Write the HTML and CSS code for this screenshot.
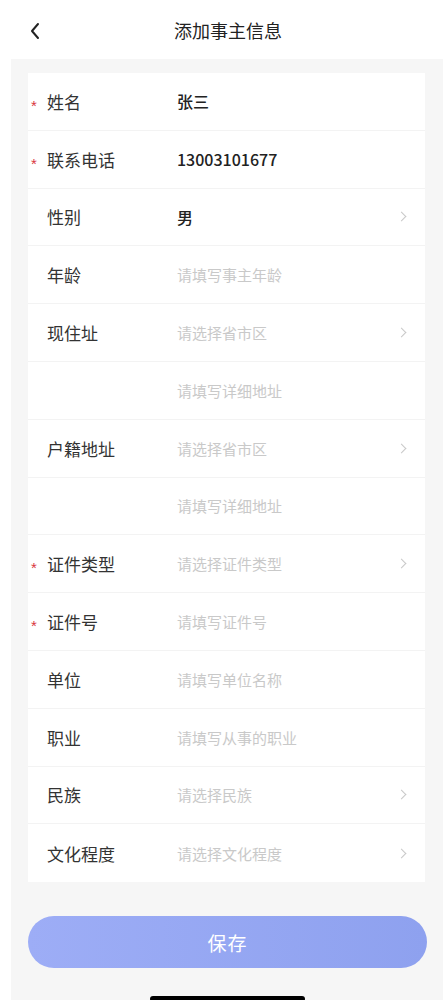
FILE: index.html
```html
<!DOCTYPE html>
<html lang="zh-CN">
<head>
    <meta charset="UTF-8">
    <title>添加事主信息</title>
    <link rel="stylesheet" href="styles.css">
</head>
<body>
<div class="page">
    <div class="nav-bar">
        <span class="back">
            <svg width="12" height="18" viewBox="0 0 12 18"><path d="M9 2 L3 9 L9 16" fill="none" stroke="#222" stroke-width="2" stroke-linecap="round" stroke-linejoin="round"/></svg>
        </span>
        <span class="nav-title">添加事主信息</span>
    </div>

    <div class="form-card">
        <div class="form-row">
            <span class="label required">姓名</span>
            <span class="value">张三</span>
        </div>
        <div class="form-row">
            <span class="label required">联系电话</span>
            <span class="value">13003101677</span>
        </div>
        <div class="form-row">
            <span class="label">性别</span>
            <span class="value">男</span>
            <span class="arrow"></span>
        </div>
        <div class="form-row">
            <span class="label">年龄</span>
            <span class="value placeholder">请填写事主年龄</span>
        </div>
        <div class="form-row">
            <span class="label">现住址</span>
            <span class="value placeholder">请选择省市区</span>
            <span class="arrow"></span>
        </div>
        <div class="form-row">
            <span class="label"></span>
            <span class="value placeholder">请填写详细地址</span>
        </div>
        <div class="form-row">
            <span class="label">户籍地址</span>
            <span class="value placeholder">请选择省市区</span>
            <span class="arrow"></span>
        </div>
        <div class="form-row">
            <span class="label"></span>
            <span class="value placeholder">请填写详细地址</span>
        </div>
        <div class="form-row">
            <span class="label required">证件类型</span>
            <span class="value placeholder">请选择证件类型</span>
            <span class="arrow"></span>
        </div>
        <div class="form-row">
            <span class="label required">证件号</span>
            <span class="value placeholder">请填写证件号</span>
        </div>
        <div class="form-row">
            <span class="label">单位</span>
            <span class="value placeholder">请填写单位名称</span>
        </div>
        <div class="form-row">
            <span class="label">职业</span>
            <span class="value placeholder">请填写从事的职业</span>
        </div>
        <div class="form-row">
            <span class="label">民族</span>
            <span class="value placeholder">请选择民族</span>
            <span class="arrow"></span>
        </div>
        <div class="form-row">
            <span class="label">文化程度</span>
            <span class="value placeholder">请选择文化程度</span>
            <span class="arrow"></span>
        </div>
    </div>

    <div class="footer">
        <button class="save-btn">保存</button>
        <div class="home-bar"></div>
    </div>
</div>
</body>
</html>
```

FILE: styles.css
```css
body {
    margin: 0;
    background-color: #fff;
    font-family: "PingFang SC", "Noto Sans CJK SC", sans-serif;
    color: #333;
}

.page {
    margin-left: 11px;
    min-height: 1000px;
    background-color: #f6f6f6;
}

.nav-bar {
    position: relative;
    height: 59px;
    display: flex;
    align-items: center;
    justify-content: center;
    background-color: #fff;
}

.back {
    position: absolute;
    left: 18px;
    top: 22px;
    display: flex;
}

.nav-title {
    font-size: 18px;
    color: #222;
    margin-left: 2px;
}

.form-card {
    margin: 14px 18px 0 17px;
    background-color: #fff;
}

.form-row {
    height: 57.8px;
    display: flex;
    align-items: center;
    border-bottom: 1px solid #f3f3f3;
    box-sizing: border-box;
}

.form-row:last-child {
    border-bottom: none;
}

.label {
    position: relative;
    width: 130px;
    padding-left: 19px;
    font-size: 17px;
    color: #333;
    flex-shrink: 0;
}

.label.required::before {
    content: "*";
    position: absolute;
    left: 3px;
    top: 8px;
    color: #d9363e;
    font-family: "Liberation Sans", sans-serif;
    font-size: 15px;
}

.value {
    flex: 1;
    font-size: 16px;
    font-weight: 500;
    color: #222;
}

.value.placeholder {
    font-size: 15px;
    font-weight: 400;
    color: #c9c9c9;
}

.arrow {
    width: 6px;
    height: 6px;
    margin-right: 20px;
    border-top: 1.2px solid #c8c8c8;
    border-right: 1.2px solid #c8c8c8;
    transform: rotate(45deg);
}

.footer {
    padding: 34px 16px 0 17px;
    display: flex;
    flex-direction: column;
    align-items: center;
}

.save-btn {
    width: 100%;
    height: 52px;
    border: none;
    border-radius: 26px;
    background: linear-gradient(90deg, #9dadf6, #8ea1ef);
    color: #fff;
    font-family: inherit;
    font-size: 19px;
    letter-spacing: 1px;
}

.home-bar {
    width: 155px;
    height: 6px;
    margin-top: 28px;
    background-color: #000;
    border-radius: 3px;
}
```
